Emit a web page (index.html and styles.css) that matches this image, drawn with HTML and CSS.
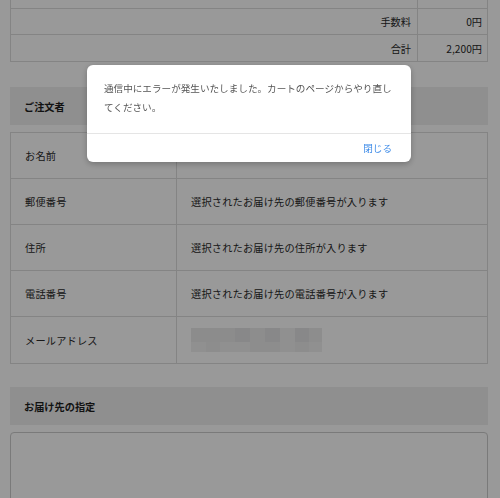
FILE: index.html
```html
<!DOCTYPE html>
<html lang="ja">
<head>
<meta charset="utf-8">
<link rel="stylesheet" href="styles.css">
</head>
<body>
<div class="page">
  <div class="summary">
    <div class="srow"><div class="slabel"></div><div class="sval"></div></div>
    <div class="srow"><div class="slabel">手数料</div><div class="sval">0円</div></div>
    <div class="srow"><div class="slabel">合計</div><div class="sval">2,200円</div></div>
  </div>

  <h2 class="section-head first">ご注文者</h2>
  <div class="info">
    <div class="irow"><div class="ilabel">お名前</div><div class="ival"></div></div>
    <div class="irow"><div class="ilabel">郵便番号</div><div class="ival">選択されたお届け先の郵便番号が入ります</div></div>
    <div class="irow"><div class="ilabel">住所</div><div class="ival">選択されたお届け先の住所が入ります</div></div>
    <div class="irow"><div class="ilabel">電話番号</div><div class="ival">選択されたお届け先の電話番号が入ります</div></div>
    <div class="irow"><div class="ilabel">メールアドレス</div><div class="ival">
      <div class="mosaic">
        <span class="m w44 c1"></span><span class="m w15 c2"></span><span class="m w15 c3"></span><span class="m w15 c2"></span><span class="m w15 c4"></span><span class="m w14 c2"></span><span class="m w13 c3"></span>
        <span class="m w15 c4 lo"></span><span class="m w14 c3 lo"></span><span class="m w30 c4 lo"></span><span class="m w30 c3 lo"></span><span class="m w15 c4 lo"></span><span class="m w14 c3 lo"></span><span class="m w13 c4 lo"></span>
      </div>
    </div></div>
  </div>

  <h2 class="section-head">お届け先の指定</h2>
  <div class="dest-box"></div>
</div>

<div class="overlay"></div>
<div class="modal">
  <p class="modal-body">通信中にエラーが発生いたしました。カートのページからやり直してください。</p>
  <div class="modal-foot"><button class="close-btn">閉じる</button></div>
</div>
</body>
</html>
```
FILE: styles.css
```css
html, body {
  margin: 0;
  padding: 0;
  background: #fff;
  height: 100%;
  overflow: hidden;
}
body {
  font-family: "Noto Sans CJK JP", "Noto Sans", sans-serif;
  color: #2a2a2a;
}
.page {
  padding: 0 12px 0 10px;
}
.summary {
  margin-top: -17px;
  border-left: 1px solid #ddd;
  border-right: 1px solid #ddd;
}
.srow {
  display: grid;
  grid-template-columns: 1fr 69px;
  height: 25px;
  border-bottom: 1px solid #ddd;
  font-size: 10.2px;
}
.srow:last-child {
  height: 26px;
}
.slabel {
  border-right: 1px solid #ddd;
  padding-right: 6px;
  display: flex;
  align-items: center;
  justify-content: flex-end;
}
.sval {
  display: flex;
  align-items: center;
  justify-content: flex-end;
  padding-right: 5px;
}
.section-head {
  margin: 23px 0 0;
  height: 38px;
  background: #eee;
  font-size: 10.2px;
  font-weight: bold;
  color: #1e1e1e;
  display: flex;
  align-items: center;
  padding-left: 14px;
}
.section-head.first {
  margin-top: 25px;
}
.info {
  margin-top: 7px;
  border: 1px solid #ddd;
}
.irow {
  display: grid;
  grid-template-columns: 166px 1fr;
  height: 45px;
  border-bottom: 1px solid #ddd;
  font-size: 10.2px;
  letter-spacing: 0.2px;
}
.irow:last-child {
  border-bottom: none;
  height: 46px;
}
.ilabel {
  border-right: 1px solid #ddd;
  padding-left: 14px;
  display: flex;
  align-items: center;
}
.ival {
  padding-left: 14px;
  display: flex;
  align-items: center;
}
.mosaic {
  display: flex;
  flex-wrap: wrap;
  width: 131px;
  height: 24px;
  background: #eeeeee;
}
.m { display: block; height: 14px; }
.m.lo { height: 10px; }
.w44 { width: 44px; }
.w30 { width: 30px; }
.w15 { width: 15px; }
.w14 { width: 14px; }
.w13 { width: 13px; }
.c1 { background: #e9e9e9; }
.c2 { background: #e3e3e5; }
.c3 { background: #ececec; }
.c4 { background: #f1f1f1; }
.dest-box {
  margin-top: 7px;
  height: 200px;
  border: 1px solid #ccc;
  border-radius: 4px;
}
.overlay {
  position: fixed;
  inset: 0;
  background: rgba(0, 0, 0, 0.4);
}
.modal {
  position: fixed;
  left: 87px;
  top: 65px;
  width: 324px;
  background: #fff;
  border-radius: 6px;
  box-shadow: 0 2px 6px rgba(0, 0, 0, 0.25);
}
.modal-body {
  margin: 0;
  padding: 14px 17px 16px;
  font-size: 9.6px;
  line-height: 19px;
  color: #555;
}
.modal-foot {
  border-top: 1px solid #e5e5e5;
  height: 28px;
  display: flex;
  align-items: center;
  justify-content: flex-end;
  padding-right: 19px;
}
.close-btn {
  border: none;
  background: none;
  padding: 0;
  font-family: inherit;
  font-size: 9.6px;
  color: #3d8be8;
  cursor: pointer;
}
```
